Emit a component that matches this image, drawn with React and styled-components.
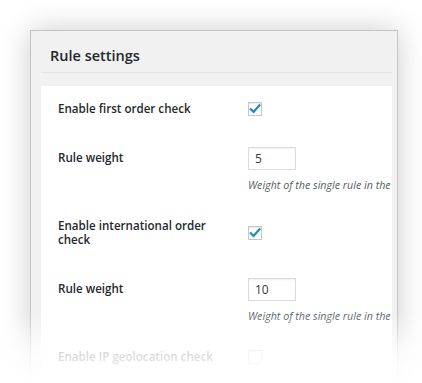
/*
**  Rule settings panel
*/

import React from 'react'
import styled, { createGlobalStyle } from 'styled-components'

const COLORS = {
  TEXT: '#23282d',
  MUTED: '#555d66',
  BORDER: '#c3c4c7',
  HEADER: '#f1f1f1',
  CHECK: '#1e8cbe',
  WHITE: '#ffffff',
}

/* STYLES */
const GlobalStyle = createGlobalStyle`
  html, body {
    margin: 0;
    padding: 0;
    background: ${COLORS.WHITE};
    overflow: hidden;
    height: 383px;
  }
  body {
    font-family: "Open Sans", "Noto Sans", sans-serif;
    color: ${COLORS.TEXT};
  }
`

const Page = styled.div`
  position: relative;
  height: 383px;
  padding: 30px 25px 0 30px;
  box-sizing: border-box;
  overflow: hidden;
`

const Panel = styled.div`
  width: 368px;
  height: 420px;
  box-sizing: border-box;
  background: ${COLORS.HEADER};
  border: 1px solid ${COLORS.BORDER};
  box-shadow: 0 0 28px rgba(0, 0, 0, 0.2);
  padding: 0 5px 0 10px;
`

const Title = styled.h2`
  margin: 0;
  padding: 15px 0 0 9px;
  height: 42px;
  box-sizing: border-box;
  border-bottom: 1px solid #e4e4e4;
  font-size: 14.5px;
  font-weight: 600;
  line-height: 20px;
`

const Body = styled.div`
  margin-top: 13px;
  background: ${COLORS.WHITE};
  padding: 1px 0 0 17px;
  overflow: hidden;
  height: 400px;
`

const Row = styled.div`
  display: flex;
  align-items: ${p => (p.$center ? 'center' : 'flex-start')};
  padding: 15px 0 ${p => (p.$center ? 16 : 12)}px;
`

const Label = styled.div`
  flex: 0 0 190px;
  box-sizing: border-box;
  padding: ${p => (p.$top ? '4px' : '0')} 28px 0 0;
  font-size: 11.6px;
  font-weight: 600;
  line-height: 14px;
`

const Field = styled.div`
  display: flex;
  flex-direction: column;
  align-items: flex-start;
  white-space: nowrap;
`

const Box = styled.span`
  display: inline-flex;
  align-items: center;
  justify-content: center;
  width: 14px;
  height: 14px;
  box-sizing: border-box;
  border: 1px solid #c4c8cc;
  background: ${COLORS.WHITE};
  box-shadow: inset 0 1px 2px rgba(0, 0, 0, 0.1);
`

const Input = styled.div`
  width: 48px;
  height: 23px;
  box-sizing: border-box;
  border: 1px solid #dcdcdc;
  box-shadow: inset 0 1px 2px rgba(0, 0, 0, 0.07);
  padding: 0 6px;
  font-size: 12px;
  line-height: 21px;
  color: #32373c;
`

const Description = styled.p`
  margin: 8px 0 0;
  font-size: 10.7px;
  font-style: italic;
  line-height: 14px;
  color: ${COLORS.MUTED};
`

const Fade = styled.div`
  position: absolute;
  left: 0;
  right: 0;
  bottom: 0;
  height: 70px;
  background: linear-gradient(to bottom, rgba(255, 255, 255, 0) 0%, rgba(255, 255, 255, 0.8) 55%, rgba(255, 255, 255, 1) 100%);
  pointer-events: none;
`

const Checkbox = ({ checked }) => (
  <Box>
    {checked && (
      <svg width="12" height="12" viewBox="0 0 12 12">
        <path d="M1.8 6.2 L4.6 9 L10.4 2.4" fill="none" stroke={COLORS.CHECK} strokeWidth="2.2" strokeLinecap="square" />
      </svg>
    )}
  </Box>
)

const CheckRow = ({ label, checked }) => (
  <Row $center>
    <Label>{label}</Label>
    <Field>
      <Checkbox checked={checked} />
    </Field>
  </Row>
)

const WeightRow = ({ value }) => (
  <Row>
    <Label $top>Rule weight</Label>
    <Field>
      <Input>{value}</Input>
      <Description>Weight of the single rule in the</Description>
    </Field>
  </Row>
)

export default function App() {
  return (
    <Page>
      <GlobalStyle />
      <Panel>
        <Title>Rule settings</Title>
        <Body>
          <CheckRow label="Enable first order check" checked />
          <WeightRow value="5" />
          <CheckRow label="Enable international order check" checked />
          <WeightRow value="10" />
          <CheckRow label="Enable IP geolocation check" />
        </Body>
      </Panel>
      <Fade />
    </Page>
  )
}
